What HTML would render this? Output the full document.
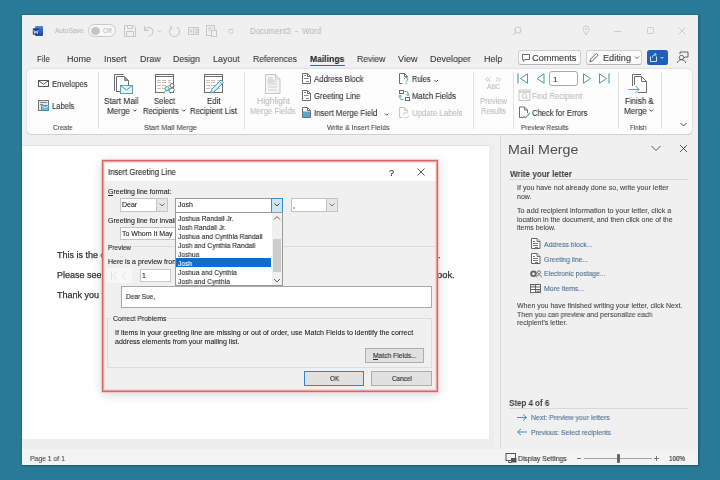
<!DOCTYPE html><html><head><meta charset="utf-8"><style>
html,body{margin:0;padding:0;}
body{width:720px;height:480px;position:relative;overflow:hidden;background:#287a96;font-family:"Liberation Sans",sans-serif;}
.t{position:absolute;white-space:pre;line-height:1;transform-origin:0 0;will-change:transform;-webkit-text-stroke-width:0.1px;}
.r{position:absolute;box-sizing:border-box;}
svg.r{overflow:visible;}
</style></head><body>
<div class="r" style="left:22px;top:15px;width:676px;height:450px;background:#f0f0f0;box-shadow:0 0 2px 0.5px rgba(0,30,50,0.35);"></div>
<svg class="r" style="left:32px;top:25px" width="13" height="13" viewBox="0 0 13 13"><defs><linearGradient id="wg" x1="0" y1="0" x2="0.3" y2="1"><stop offset="0" stop-color="#4a9ae8"/><stop offset="1" stop-color="#1a4fa8"/></linearGradient></defs><rect x="3" y="1" width="8" height="10" rx="1" fill="url(#wg)"/><rect x="0.8" y="3.2" width="6.5" height="6.5" rx="0.8" fill="#1f3f8f"/><path d="M1.8 5l0.9 3.6l1.3-2.6l1.3 2.6L6.2 5" fill="none" stroke="#d8e6fa" stroke-width="0.9"/></svg>
<div class="t" style="left:54.70px;top:27.00px;font-size:8px;color:#b9b9b9;transform:scaleX(0.822);">AutoSave</div>
<div class="r" style="left:87.5px;top:24px;width:28.5px;height:13px;border:1px solid #c9c9c9;border-radius:7px;box-sizing:border-box;background:#f7f7f7;"></div>
<div class="r" style="left:90.5px;top:26.5px;width:9.0px;height:8.0px;background:#c4c4c4;border-radius:50%;"></div>
<div class="t" style="left:103.00px;top:27.00px;font-size:7.5px;color:#bdbdbd;transform:scaleX(0.882);">Off</div>
<svg class="r" style="left:124px;top:25px" width="13" height="13" viewBox="0 0 13 13"><path d="M0.5 0.5h9l2 2v9h-11z" fill="none" stroke="#c8c8c8" stroke-width="1"/><path d="M3.5 0.5v3h5v-3M2.5 11.5v-5h7v5" fill="none" stroke="#c8c8c8" stroke-width="1"/></svg>
<svg class="r" style="left:143px;top:25px" width="13" height="13" viewBox="0 0 13 13"><path d="M1.5 1v4.5h4.5" fill="none" stroke="#c8c8c8" stroke-width="1.1"/><path d="M2 5C3.5 2.5 6 2 8 3C10.3 4.3 10.5 7.5 8.8 9.5C7.8 10.6 6.5 11.2 5 11.5" fill="none" stroke="#c8c8c8" stroke-width="1.1"/></svg>
<svg class="r" style="left:157px;top:29px" width="6" height="5" viewBox="0 0 6 5"><path d="M0.5 1l2 2l2-2" fill="none" stroke="#c8c8c8" stroke-width="0.9"/></svg>
<svg class="r" style="left:168px;top:25px" width="14" height="13" viewBox="0 0 14 13"><path d="M4 2.2A5 5 0 1 0 9 2.2" fill="none" stroke="#c8c8c8" stroke-width="1.1"/><path d="M1.8 0.8L4 2.2L2.8 4.6" fill="none" stroke="#c8c8c8" stroke-width="1"/></svg>
<svg class="r" style="left:188px;top:27px" width="13" height="9" viewBox="0 0 13 9"><rect x="0.5" y="0.5" width="10" height="7" fill="none" stroke="#c8c8c8" stroke-width="1"/><path d="M5.5 0.5v7M3 2v4M1.5 4h3M7 2.5h3M7 4h3M7 5.5h3" stroke="#c8c8c8" stroke-width="1"/></svg>
<svg class="r" style="left:206px;top:25px" width="12" height="13" viewBox="0 0 12 13"><rect x="0.5" y="0.5" width="8" height="10" fill="none" stroke="#c8c8c8" stroke-width="1"/><path d="M2 3h5M2 5h3" stroke="#c8c8c8" stroke-width="1"/><rect x="5.5" y="5.5" width="5" height="6" fill="#f0f0f0" stroke="#c8c8c8" stroke-width="1"/></svg>
<svg class="r" style="left:228px;top:28px" width="7" height="7" viewBox="0 0 7 7"><path d="M0.5 1.5h5M1 2.5v1.3a2 1.7 0 0 0 4 0V2.5" fill="none" stroke="#c8c8c8" stroke-width="0.9"/></svg>
<div class="t" style="left:249.70px;top:27.00px;font-size:8.5px;color:#bcbcbc;transform:scaleX(0.937);">Document3  -  Word</div>
<svg class="r" style="left:512px;top:26px" width="11" height="11" viewBox="0 0 11 11"><circle cx="6" cy="4" r="3" fill="none" stroke="#cdcdcd" stroke-width="1.1"/><path d="M3.9 6.1L1.2 8.8" stroke="#cdcdcd" stroke-width="1.2"/></svg>
<svg class="r" style="left:582px;top:25px" width="9" height="12" viewBox="0 0 9 12"><path d="M4 10L1.6 5.8A3 3 0 1 1 6.4 5.8z" fill="none" stroke="#cdcdcd" stroke-width="1"/><circle cx="4" cy="4" r="1" fill="#cdcdcd"/></svg>
<div class="r" style="left:614px;top:30.5px;width:7px;height:1.0px;background:#cdcdcd;"></div>
<div class="r" style="left:646.5px;top:27px;width:7.0px;height:7px;border:1px solid #cdcdcd;border-radius:1.5px;"></div>
<svg class="r" style="left:678px;top:27px" width="9" height="9" viewBox="0 0 9 9"><path d="M0.5 0.5L7.5 7.5M7.5 0.5L0.5 7.5" stroke="#cdcdcd" stroke-width="1"/></svg>
<div class="t" style="left:36.70px;top:55.00px;font-size:9px;color:#3b3b3b;transform:scaleX(0.883);">File</div>
<div class="t" style="left:66.70px;top:55.00px;font-size:9px;color:#3b3b3b;">Home</div>
<div class="t" style="left:104.20px;top:55.00px;font-size:9px;color:#3b3b3b;">Insert</div>
<div class="t" style="left:139.70px;top:55.00px;font-size:9px;color:#3b3b3b;transform:scaleX(0.981);">Draw</div>
<div class="t" style="left:173.00px;top:55.00px;font-size:9px;color:#3b3b3b;transform:scaleX(0.964);">Design</div>
<div class="t" style="left:213.00px;top:55.00px;font-size:9px;color:#3b3b3b;transform:scaleX(0.988);">Layout</div>
<div class="t" style="left:253.30px;top:55.00px;font-size:9px;color:#3b3b3b;transform:scaleX(0.956);">References</div>
<div class="t" style="left:356.70px;top:55.00px;font-size:9px;color:#3b3b3b;transform:scaleX(0.959);">Review</div>
<div class="t" style="left:397.70px;top:55.00px;font-size:9px;color:#3b3b3b;transform:scaleX(1.013);">View</div>
<div class="t" style="left:430.00px;top:55.00px;font-size:9px;color:#3b3b3b;transform:scaleX(0.992);">Developer</div>
<div class="t" style="left:484.00px;top:55.00px;font-size:9px;color:#3b3b3b;transform:scaleX(0.989);">Help</div>
<div class="t" style="left:310.00px;top:55.00px;font-size:9px;color:#262626;font-weight:700;transform:scaleX(0.953);">Mailings</div>
<div class="r" style="left:310px;top:64.5px;width:34.5px;height:1.5px;background:#3a64a8;border-radius:1px;"></div>
<div class="r" style="left:518px;top:49.5px;width:63px;height:15.5px;border:1px solid #cfcfcf;border-bottom-color:#b5b5b5;border-radius:3px;background:#fbfbfb;"></div>
<svg class="r" style="left:522px;top:54px" width="9" height="9" viewBox="0 0 9 9"><path d="M0.5 0.5h7v5H3L1.2 7.3V5.5H0.5z" fill="none" stroke="#555" stroke-width="0.9"/></svg>
<div class="t" style="left:532.00px;top:54.00px;font-size:8.5px;color:#3a3a3a;transform:scaleX(1.081);">Comments</div>
<div class="r" style="left:586px;top:49.5px;width:56px;height:15.5px;border:1px solid #cfcfcf;border-bottom-color:#b5b5b5;border-radius:3px;background:#fbfbfb;"></div>
<svg class="r" style="left:589px;top:52px" width="11" height="11" viewBox="0 -0.5 11 11"><path d="M0.8 9.2l0.8-2.6l5.8-5.8l1.8 1.8l-5.8 5.8z" fill="none" stroke="#555" stroke-width="0.9"/></svg>
<div class="t" style="left:602.50px;top:54.00px;font-size:8.5px;color:#3a3a3a;transform:scaleX(1.077);">Editing</div>
<svg class="r" style="left:634px;top:56px" width="6" height="4" viewBox="-0.5 0 6 4"><path d="M0.5 0.5l2 2l2-2" fill="none" stroke="#555" stroke-width="0.9"/></svg>
<div class="r" style="left:647px;top:50px;width:20.5px;height:15px;background:#1c5fc0;border-radius:2.5px;"></div>
<svg class="r" style="left:649px;top:52px" width="18" height="12" viewBox="0 0 18 12"><path d="M1.5 4.5v5h6v-5" fill="none" stroke="#e8f0ff" stroke-width="0.9"/><path d="M3.5 5.5c0-1.8 1-2.8 3-3M5.5 0.8l1.6 1.6l-1.6 1.6" fill="none" stroke="#e8f0ff" stroke-width="0.9"/><path d="M11.5 5l1.5 1.5L14.5 5" fill="none" stroke="#e8f0ff" stroke-width="0.9"/></svg>
<svg class="r" style="left:676px;top:51px" width="14" height="13" viewBox="-0.5 -0.5 14 13"><path d="M3.5 2.5V0.5h8v5h-3l-1.5 1.5" fill="none" stroke="#555" stroke-width="0.9"/><circle cx="5" cy="6" r="2.2" fill="#f0f0f0" stroke="#555" stroke-width="0.9"/><path d="M0.8 11.5c0.6-2.3 2.1-3.3 4.2-3.3s3.6 1 4.2 3.3" fill="none" stroke="#555" stroke-width="0.9"/></svg>
<div class="r" style="left:27px;top:69px;width:665px;height:65px;background:#fdfdfd;border-radius:4.5px;box-shadow:0 0.6px 2px rgba(0,0,0,0.18);"></div>
<div class="r" style="left:97.5px;top:72px;width:1.0px;height:57px;background:#e1e1e1;"></div>
<div class="r" style="left:243.5px;top:72px;width:1.0px;height:57px;background:#e1e1e1;"></div>
<div class="r" style="left:472.5px;top:72px;width:1.0px;height:57px;background:#e1e1e1;"></div>
<div class="r" style="left:512.5px;top:72px;width:1.0px;height:57px;background:#e1e1e1;"></div>
<div class="r" style="left:617.5px;top:72px;width:1.0px;height:57px;background:#e1e1e1;"></div>
<div class="r" style="left:661px;top:72px;width:1px;height:57px;background:#e1e1e1;"></div>
<svg class="r" style="left:38px;top:80px" width="13" height="9" viewBox="0 0 13 9"><rect x="0.5" y="0.5" width="10" height="6" fill="none" stroke="#555" stroke-width="1"/><path d="M0.8 0.8L5.5 4.3L10.2 0.8" fill="none" stroke="#555" stroke-width="1"/></svg>
<div class="t" style="left:51.50px;top:80.00px;font-size:8.5px;color:#303030;transform:scaleX(0.894);">Envelopes</div>
<svg class="r" style="left:38px;top:100px" width="13" height="13" viewBox="0 0 13 13"><rect x="0.5" y="0.5" width="10" height="10" fill="#dfe9ee" stroke="#777" stroke-width="1"/><path d="M2 2.5h7M2 4.5h3" stroke="#8a8a8a" stroke-width="1"/><rect x="3.5" y="5.5" width="7" height="5" fill="#6fb6d6" stroke="#3f95bb" stroke-width="1"/><path d="M3.8 5.8l3.2 2.4l3.2-2.4" fill="none" stroke="#e9f6fb" stroke-width="0.9"/></svg>
<div class="t" style="left:51.50px;top:102.00px;font-size:8.5px;color:#303030;transform:scaleX(0.890);">Labels</div>
<div class="t" style="left:53.40px;top:124.00px;font-size:7.5px;color:#4a4a4a;transform:scaleX(0.875);">Create</div>
<svg class="r" style="left:113px;top:73px" width="21" height="22" viewBox="-0.5 -0.5 21 22"><path d="M1 17.5V1H10" fill="none" stroke="#6e6e6e" stroke-width="1"/><path d="M3 18.5V3H11L15 7V12" fill="#fff" stroke="#6e6e6e" stroke-width="1"/><path d="M11 3V7H15z" fill="#9a9a9a" stroke="#6e6e6e" stroke-width="0.8"/><path d="M3 18H7" stroke="#6e6e6e" stroke-width="1"/><rect x="7" y="12" width="12" height="8" fill="#e3f4f6" stroke="#5aa3ae" stroke-width="1"/><path d="M7.3 12.3l5.7 4.2l5.7-4.2" fill="none" stroke="#5aa3ae" stroke-width="1"/></svg>
<div class="t" style="left:104.40px;top:97.00px;font-size:8.5px;color:#303030;transform:scaleX(0.957);">Start Mail</div>
<div class="t" style="left:106.90px;top:107.00px;font-size:8.5px;color:#303030;transform:scaleX(0.959);">Merge</div>
<svg class="r" style="left:132px;top:109px" width="6" height="4" viewBox="-0.5 0 6 4"><path d="M0.5 0.5l1.75 1.75l1.75-1.75" fill="none" stroke="#303030" stroke-width="0.9"/></svg>
<svg class="r" style="left:155px;top:74px" width="22" height="22" viewBox="0 0 22 22"><rect x="0.5" y="0.5" width="18" height="18" fill="#fff" stroke="#6e6e6e" stroke-width="1"/><path d="M0.5 2.5h18" stroke="#6e6e6e" stroke-width="1"/><path d="M2 6.5h4" stroke="#cdbfb4" stroke-width="1"/><path d="M7 6.5h4" stroke="#cdbfb4" stroke-width="1"/><path d="M13 6.5h3" stroke="#cdbfb4" stroke-width="1"/><path d="M2 8.5h4" stroke="#cdbfb4" stroke-width="1"/><path d="M7 8.5h4" stroke="#cdbfb4" stroke-width="1"/><path d="M13 8.5h3" stroke="#cdbfb4" stroke-width="1"/><path d="M2 11.5h4" stroke="#cdbfb4" stroke-width="1"/><path d="M7 11.5h4" stroke="#cdbfb4" stroke-width="1"/><path d="M13 11.5h3" stroke="#cdbfb4" stroke-width="1"/><path d="M2 14.5h4" stroke="#cdbfb4" stroke-width="1"/><path d="M7 14.5h4" stroke="#cdbfb4" stroke-width="1"/><path d="M13 14.5h3" stroke="#cdbfb4" stroke-width="1"/><path d="M14.3 16.5c0.4-1.7 1.3-2.4 2.7-2.4s2.3 0.7 2.7 2.4" fill="#fff" stroke="#6e6e6e" stroke-width="1"/><circle cx="17" cy="11.5" r="2" fill="#fff" stroke="#6e6e6e" stroke-width="1"/><path d="M8.6 19.5c0.6-2 1.8-3 3.4-3s2.8 1 3.4 3" fill="#e3f5fa" stroke="#4aa0b5" stroke-width="1"/><circle cx="12" cy="14.5" r="2" fill="#d8f1f8" stroke="#4aa0b5" stroke-width="1"/></svg>
<div class="t" style="left:153.75px;top:97.00px;font-size:8.5px;color:#303030;transform:scaleX(0.891);">Select</div>
<div class="t" style="left:143.00px;top:107.00px;font-size:8.5px;color:#303030;transform:scaleX(0.901);">Recipients</div>
<svg class="r" style="left:181px;top:109px" width="6" height="4" viewBox="-0.5 0 6 4"><path d="M0.5 0.5l1.75 1.75l1.75-1.75" fill="none" stroke="#303030" stroke-width="0.9"/></svg>
<svg class="r" style="left:204px;top:74px" width="22" height="22" viewBox="0 0 22 22"><rect x="0.5" y="0.5" width="18" height="18" fill="#fff" stroke="#6e6e6e" stroke-width="1"/><path d="M0.5 2.5h18" stroke="#6e6e6e" stroke-width="1"/><path d="M2 6.5h4" stroke="#cdbfb4" stroke-width="1"/><path d="M7 6.5h4" stroke="#cdbfb4" stroke-width="1"/><path d="M13 6.5h3" stroke="#cdbfb4" stroke-width="1"/><path d="M2 8.5h4" stroke="#cdbfb4" stroke-width="1"/><path d="M7 8.5h4" stroke="#cdbfb4" stroke-width="1"/><path d="M13 8.5h3" stroke="#cdbfb4" stroke-width="1"/><path d="M2 11.5h4" stroke="#cdbfb4" stroke-width="1"/><path d="M7 11.5h4" stroke="#cdbfb4" stroke-width="1"/><path d="M13 11.5h3" stroke="#cdbfb4" stroke-width="1"/><path d="M2 14.5h4" stroke="#cdbfb4" stroke-width="1"/><path d="M7 14.5h4" stroke="#cdbfb4" stroke-width="1"/><path d="M13 14.5h3" stroke="#cdbfb4" stroke-width="1"/><path d="M6.5 19L7.5 15.5L17 6L19.5 8.5L10 18z" fill="#d4eef7" stroke="#4aa0b5" stroke-width="1"/><path d="M15.5 7.5L18 10" stroke="#4aa0b5" stroke-width="0.8"/></svg>
<div class="t" style="left:206.50px;top:97.00px;font-size:8.5px;color:#303030;transform:scaleX(0.922);">Edit</div>
<div class="t" style="left:189.80px;top:107.00px;font-size:8.5px;color:#303030;transform:scaleX(0.919);">Recipient List</div>
<div class="t" style="left:144.00px;top:124.00px;font-size:7.5px;color:#4a4a4a;transform:scaleX(0.963);">Start Mail Merge</div>
<svg class="r" style="left:265px;top:74px" width="17" height="21" viewBox="0 0 17 21"><path d="M0.5 0.5h10l4.5 4.5v14.5H0.5z" fill="#f4f4f4" stroke="#c6c6c6" stroke-width="1"/><path d="M10.5 0.5v4.5h4.5" fill="none" stroke="#c6c6c6"/><path d="M3 4h5M3 7h9M3 10h9M3 13h9M3 16h9" stroke="#cfcfcf" stroke-width="1"/><rect x="2.5" y="5" width="6" height="4" fill="#dcdcdc"/></svg>
<div class="t" style="left:256.70px;top:97.00px;font-size:8.5px;color:#bdbdbd;transform:scaleX(0.995);">Highlight</div>
<div class="t" style="left:250.40px;top:107.00px;font-size:8.5px;color:#bdbdbd;transform:scaleX(0.924);">Merge Fields</div>
<svg class="r" style="left:302px;top:73px" width="11" height="13" viewBox="0 0 11 13"><path d="M0.5 0.5H5.5L8.5 3.5V10.5H0.5Z" fill="#fff" stroke="#6e6e6e" stroke-width="1"/><path d="M5.5 0.5V3.5H8.5" fill="none" stroke="#6e6e6e" stroke-width="1"/><path d="M2 2.5h2M2 5.5h4.5M4 8.5h3" stroke="#8a8a8a" stroke-width="1"/></svg>
<div class="t" style="left:314.10px;top:75.00px;font-size:8.5px;color:#303030;transform:scaleX(0.913);">Address Block</div>
<svg class="r" style="left:302px;top:90px" width="11" height="13" viewBox="0 0 11 13"><path d="M0.5 0.5H5.5L8.5 3.5V10.5H0.5Z" fill="#fff" stroke="#6e6e6e" stroke-width="1"/><path d="M5.5 0.5V3.5H8.5" fill="none" stroke="#6e6e6e" stroke-width="1"/><path d="M2 2.5h2M2 5.5h4.5M4 8.5h3" stroke="#8a8a8a" stroke-width="1"/></svg>
<div class="t" style="left:314.10px;top:92.00px;font-size:8.5px;color:#303030;transform:scaleX(0.909);">Greeting Line</div>
<svg class="r" style="left:302px;top:107px" width="11" height="13" viewBox="0 0 11 13"><rect x="1" y="4.5" width="7" height="5.5" fill="#5aa9c9"/><path d="M0.5 0.5H5.5L8.5 3.5V10.5H0.5Z" fill="none" stroke="#6e6e6e" stroke-width="1"/><path d="M5.5 0.5V3.5H8.5" fill="none" stroke="#6e6e6e" stroke-width="1"/></svg>
<div class="t" style="left:314.10px;top:109.00px;font-size:8.5px;color:#303030;transform:scaleX(0.926);">Insert Merge Field</div>
<svg class="r" style="left:384px;top:113px" width="6" height="4" viewBox="-0.5 0 6 4"><path d="M0.5 0.5l1.75 1.75l1.75-1.75" fill="none" stroke="#303030" stroke-width="0.9"/></svg>
<div class="t" style="left:326.50px;top:124.00px;font-size:7.5px;color:#4a4a4a;transform:scaleX(0.928);">Write &amp; Insert Fields</div>
<svg class="r" style="left:399px;top:73px" width="13" height="13" viewBox="0 0 13 13"><path d="M3.5 10.5H0.5V0.5H5.5L8.5 3.5V4.5" fill="none" stroke="#6e6e6e" stroke-width="1"/><path d="M5.5 0.5V3.5H8.5" fill="none" stroke="#6e6e6e" stroke-width="1"/><path d="M5.3 6.3a1.7 1.7 0 1 1 2.5 1.5c-0.5 0.3-0.8 0.6-0.8 1.3M7 10v1.2" fill="none" stroke="#4aa0b5" stroke-width="1"/></svg>
<div class="t" style="left:411.50px;top:75.00px;font-size:8.5px;color:#303030;transform:scaleX(0.851);">Rules</div>
<svg class="r" style="left:434px;top:79px" width="6" height="4" viewBox="0 -0.5 6 4"><path d="M0.5 0.5l1.75 1.75l1.75-1.75" fill="none" stroke="#303030" stroke-width="0.9"/></svg>
<svg class="r" style="left:398px;top:89px" width="14" height="14" viewBox="0 0 14 14"><rect x="1.5" y="1.5" width="4" height="3" fill="#fff" stroke="#6e6e6e" stroke-width="1"/><rect x="7.5" y="8.5" width="4" height="3" fill="#fff" stroke="#6e6e6e" stroke-width="1"/><path d="M6.5 2.5H8.5Q10 2.5 10 4V6.5M8.5 5.3L10 6.8L11.5 5.3M5.5 10.5H3.5Q2 10.5 2 9V6.5M0.5 7.7L2 6.2L3.5 7.7" fill="none" stroke="#4aa0b5" stroke-width="1"/></svg>
<div class="t" style="left:411.50px;top:92.00px;font-size:8.5px;color:#303030;transform:scaleX(0.911);">Match Fields</div>
<svg class="r" style="left:399px;top:107px" width="13" height="13" viewBox="0 0 13 13"><path d="M3.5 10.5H0.5V0.5H5.5L8.5 3.5V5" fill="none" stroke="#c8c8c8" stroke-width="1"/><path d="M5.5 0.5V3.5H8.5" fill="none" stroke="#c8c8c8" stroke-width="1"/><path d="M4.5 8A2.5 2.5 0 0 1 9 6.5M9.5 8.5A2.5 2.5 0 0 1 5 10" fill="none" stroke="#c8c8c8" stroke-width="1"/></svg>
<div class="t" style="left:411.50px;top:109.00px;font-size:8.5px;color:#bdbdbd;transform:scaleX(0.921);">Update Labels</div>
<svg class="r" style="left:484px;top:77px" width="20" height="6" viewBox="0 0 20 6"><path d="M4 0.5L1.5 2.5l2.5 2M6.5 0.5L4 2.5l2.5 2M12 0.5L14.5 2.5l-2.5 2M14.5 0.5L17 2.5l-2.5 2" fill="none" stroke="#c6c6c6" stroke-width="0.9"/></svg>
<div class="t" style="left:486.80px;top:83.00px;font-size:7px;color:#b9b9b9;transform:scaleX(0.931);">ABC</div>
<div class="t" style="left:479.80px;top:97.00px;font-size:8.5px;color:#bdbdbd;transform:scaleX(0.896);">Preview</div>
<div class="t" style="left:480.80px;top:107.00px;font-size:8.5px;color:#bdbdbd;transform:scaleX(0.882);">Results</div>
<svg class="r" style="left:517px;top:73px" width="13" height="12" viewBox="0 0 13 12"><path d="M1 0.5v10" stroke="#4f97ae" stroke-width="1.1"/><path d="M10.5 0.8L3.5 5.5l7 4.7z" fill="none" stroke="#4f97ae" stroke-width="1"/></svg>
<svg class="r" style="left:536px;top:73px" width="10" height="12" viewBox="0 0 10 12"><path d="M8 0.8L1 5.5l7 4.7z" fill="none" stroke="#4f97ae" stroke-width="1"/></svg>
<div class="r" style="left:549px;top:71px;width:29px;height:15px;border:1px solid #a8a8a8;border-radius:3px;background:#fff;"></div>
<div class="t" style="left:553.00px;top:76.00px;font-size:8px;color:#303030;">1</div>
<svg class="r" style="left:582px;top:73px" width="10" height="12" viewBox="-0.5 0 10 12"><path d="M1 0.8L8 5.5l-7 4.7z" fill="none" stroke="#4f97ae" stroke-width="1"/></svg>
<svg class="r" style="left:598px;top:73px" width="13" height="12" viewBox="0 0 13 12"><path d="M11 0.5v10" stroke="#4f97ae" stroke-width="1.1"/><path d="M1.5 0.8L8.5 5.5l-7 4.7z" fill="none" stroke="#4f97ae" stroke-width="1"/></svg>
<svg class="r" style="left:518px;top:89px" width="13" height="13" viewBox="-0.5 -0.5 13 13"><rect x="0.5" y="0.5" width="11" height="10.5" fill="none" stroke="#c8c8c8"/><path d="M0.5 2.5h11" stroke="#c8c8c8" stroke-width="1.5"/><circle cx="6" cy="6.5" r="2.3" fill="none" stroke="#c8c8c8"/><path d="M7.7 8.2l2 2" stroke="#c8c8c8"/></svg>
<div class="t" style="left:531.90px;top:92.00px;font-size:8.5px;color:#bdbdbd;transform:scaleX(0.920);">Find Recipient</div>
<svg class="r" style="left:519px;top:106px" width="13" height="13" viewBox="0 -0.5 13 13"><path d="M0.5 0.5h5l3 3v3" fill="none" stroke="#6e6e6e" stroke-width="1"/><path d="M0.5 0.5v10.5h4" fill="none" stroke="#6e6e6e"/><path d="M5.5 0.5v3h3" fill="none" stroke="#6e6e6e" stroke-width="0.9"/><path d="M4.5 9.5l2 1.8l4.5-5" fill="none" stroke="#4aa36b" stroke-width="1.1"/></svg>
<div class="t" style="left:531.90px;top:109.00px;font-size:8.5px;color:#303030;transform:scaleX(0.899);">Check for Errors</div>
<div class="t" style="left:520.80px;top:124.00px;font-size:7.5px;color:#4a4a4a;transform:scaleX(0.883);">Preview Results</div>
<svg class="r" style="left:628px;top:73px" width="22" height="22" viewBox="0 0 22 22"><path d="M4.5 13V1.5H13" fill="none" stroke="#6e6e6e" stroke-width="1"/><path d="M6.5 12V3.5H13.5L18.5 8.5V19.5H10" fill="#fff" stroke="#6e6e6e" stroke-width="1"/><path d="M13.5 3.5V8.5H18.5" fill="none" stroke="#6e6e6e" stroke-width="1"/><path d="M0.5 16.5H11M7.5 13L11 16.5L7.5 20" fill="none" stroke="#4aa0b5" stroke-width="1"/></svg>
<div class="t" style="left:624.60px;top:97.00px;font-size:8.5px;color:#303030;transform:scaleX(0.935);">Finish &amp;</div>
<div class="t" style="left:624.00px;top:107.00px;font-size:8.5px;color:#303030;transform:scaleX(0.955);">Merge</div>
<svg class="r" style="left:649px;top:109px" width="6" height="4" viewBox="0 0 6 4"><path d="M0.5 0.5l1.75 1.75l1.75-1.75" fill="none" stroke="#303030" stroke-width="0.9"/></svg>
<div class="t" style="left:630.40px;top:124.00px;font-size:7.5px;color:#4a4a4a;transform:scaleX(0.830);">Finish</div>
<svg class="r" style="left:680px;top:122px" width="8" height="5" viewBox="0 -0.5 8 5"><path d="M0.5 0.5l3 3l3-3" fill="none" stroke="#444" stroke-width="1"/></svg>
<div class="r" style="left:22px;top:134.5px;width:478px;height:314.5px;background:#ededed;"></div>
<div class="r" style="left:22px;top:134.5px;width:478px;height:10.5px;background:#f0f0f0;"></div>
<div class="r" style="left:493.5px;top:134.5px;width:6.0px;height:314.5px;background:#f1f1f1;"></div>
<div class="r" style="left:22px;top:145px;width:467px;height:1px;background:#e2e2e2;"></div>
<div class="r" style="left:22px;top:146px;width:467px;height:293px;background:#ffffff;"></div>
<div class="r" style="left:500px;top:134.5px;width:1px;height:314.5px;background:#dcdcdc;"></div>
<div class="r" style="left:501px;top:134.5px;width:197px;height:314.5px;background:#f0f0f0;"></div>
<div class="t" style="left:56.50px;top:251.00px;font-size:9px;color:#333333;-webkit-text-stroke:0.25px #333;">This is the content of the letter</div>
<div class="t" style="left:56.50px;top:271.00px;font-size:9px;color:#333333;-webkit-text-stroke:0.25px #333;">Please see the enclosed catalog</div>
<div class="t" style="left:56.50px;top:291.00px;font-size:9px;color:#333333;-webkit-text-stroke:0.25px #333;">Thank you for your business</div>
<div class="t" style="left:438.00px;top:251.00px;font-size:9px;color:#333333;-webkit-text-stroke:0.25px #333;">.</div>
<div class="t" style="left:437.00px;top:271.00px;font-size:9px;color:#333333;transform:scaleX(1.041);-webkit-text-stroke:0.25px #333;">ook.</div>
<div class="r" style="left:22px;top:449px;width:676px;height:16px;background:#f3f3f3;"></div>
<div class="t" style="left:29.60px;top:455.00px;font-size:7.5px;color:#444;transform:scaleX(0.910);">Page 1 of 1</div>
<svg class="r" style="left:505px;top:453px" width="13" height="11" viewBox="-0.5 0 13 11"><rect x="0.5" y="0.5" width="9.5" height="7" fill="none" stroke="#555" stroke-width="1"/><path d="M3 8.5v1h3" stroke="#555"/><rect x="5.5" y="5" width="5.5" height="4.5" fill="#555"/></svg>
<div class="t" style="left:518.00px;top:455.00px;font-size:7.5px;color:#333;transform:scaleX(0.906);">Display Settings</div>
<div class="r" style="left:576.5px;top:457.5px;width:4.0px;height:1.0px;background:#777;"></div>
<div class="r" style="left:584px;top:457.5px;width:67.5px;height:1.0px;background:#a5a5a5;"></div>
<div class="r" style="left:617px;top:453.5px;width:3px;height:9.0px;background:#666;border-radius:1px;"></div>
<div class="r" style="left:654px;top:457.5px;width:5px;height:1.0px;background:#777;"></div>
<div class="r" style="left:656px;top:455.5px;width:1px;height:5.0px;background:#777;"></div>
<div class="t" style="left:668.60px;top:455.00px;font-size:8px;color:#222;transform:scaleX(0.787);">100%</div>
<div class="t" style="left:507.60px;top:143.00px;font-size:13px;color:#4f4f4f;transform:scaleX(1.095);-webkit-text-stroke-width:0;">Mail Merge</div>
<svg class="r" style="left:651px;top:145px" width="11" height="7" viewBox="0 -0.5 11 7"><path d="M0.5 0.5l4.5 4.5l4.5-4.5" fill="none" stroke="#555" stroke-width="1"/></svg>
<svg class="r" style="left:679px;top:144px" width="9" height="9" viewBox="-0.5 -0.5 9 9"><path d="M0.5 0.5l7 7M7.5 0.5l-7 7" stroke="#555" stroke-width="1"/></svg>
<div class="t" style="left:509.70px;top:170.00px;font-size:8.5px;color:#3a3a3a;font-weight:700;transform:scaleX(0.950);-webkit-text-stroke-width:0;">Write your letter</div>
<div class="r" style="left:509px;top:179px;width:179px;height:1px;background:#d8d8d8;"></div>
<div class="t" style="left:516.70px;top:184.00px;font-size:7px;color:#4a4a4a;transform:scaleX(1.015);">If you have not already done so, write your letter</div>
<div class="t" style="left:516.70px;top:193.00px;font-size:7px;color:#4a4a4a;">now.</div>
<div class="t" style="left:516.70px;top:207.00px;font-size:7px;color:#4a4a4a;transform:scaleX(1.030);">To add recipient information to your letter, click a</div>
<div class="t" style="left:516.70px;top:216.00px;font-size:7px;color:#4a4a4a;">location in the document, and then click one of the</div>
<div class="t" style="left:516.70px;top:224.00px;font-size:7px;color:#4a4a4a;">items below.</div>
<svg class="r" style="left:531px;top:238px" width="11" height="12" viewBox="0 0 11 12"><path d="M0.5 0.5h5.5l3 3v7H0.5z" fill="#fff" stroke="#666" stroke-width="1"/><path d="M6 0.5v3h3" fill="#ddd" stroke="#666" stroke-width="0.9"/><path d="M2 3.5h2M2 5.5h5M2 7.5h5M4 9.5h3" stroke="#777" stroke-width="1"/></svg>
<div class="t" style="left:543.90px;top:241.00px;font-size:7px;color:#4d7091;transform:scaleX(0.970);">Address block...</div>
<svg class="r" style="left:531px;top:253px" width="11" height="12" viewBox="0 0 11 12"><path d="M0.5 0.5h5.5l3 3v7H0.5z" fill="#fff" stroke="#666" stroke-width="1"/><path d="M6 0.5v3h3" fill="#ddd" stroke="#666" stroke-width="0.9"/><path d="M2 3.5h2M2 5.5h5M2 7.5h5M4 9.5h3" stroke="#777" stroke-width="1"/></svg>
<div class="t" style="left:543.90px;top:256.00px;font-size:7px;color:#4d7091;transform:scaleX(0.969);">Greeting line...</div>
<svg class="r" style="left:530px;top:270px" width="13" height="9" viewBox="0 0 13 9"><circle cx="3.5" cy="3.8" r="3.3" fill="#666"/><circle cx="3.5" cy="3.8" r="1.4" fill="#f0f0f0"/><circle cx="9" cy="2.3" r="1.6" fill="none" stroke="#666" stroke-width="0.9"/><path d="M6.5 7.3c0.3-1.6 1.1-2.4 2.5-2.4s2.2 0.8 2.5 2.4" fill="none" stroke="#666" stroke-width="0.9"/></svg>
<div class="t" style="left:543.90px;top:270.00px;font-size:7px;color:#4d7091;transform:scaleX(0.970);">Electronic postage...</div>
<svg class="r" style="left:530px;top:284px" width="12" height="10" viewBox="0 0 12 10"><rect x="0.5" y="0.5" width="10" height="8" fill="#fff" stroke="#666"/><path d="M5.5 0.5v8M0.5 3h10M0.5 5.5h10" stroke="#666" stroke-width="1"/><rect x="1.5" y="1.5" width="3" height="1" fill="#888"/><rect x="6.5" y="6.5" width="3" height="1.5" fill="#888"/></svg>
<div class="t" style="left:543.90px;top:285.00px;font-size:7px;color:#4d7091;transform:scaleX(0.991);">More items...</div>
<div class="t" style="left:516.70px;top:302.00px;font-size:7px;color:#4a4a4a;">When you have finished writing your letter, click Next.</div>
<div class="t" style="left:516.70px;top:311.00px;font-size:7px;color:#4a4a4a;transform:scaleX(0.988);">Then you can preview and personalize each</div>
<div class="t" style="left:516.70px;top:319.00px;font-size:7px;color:#4a4a4a;">recipient's letter.</div>
<div class="t" style="left:509.30px;top:399.00px;font-size:8.5px;color:#3a3a3a;font-weight:700;transform:scaleX(0.938);-webkit-text-stroke-width:0;">Step 4 of 6</div>
<div class="r" style="left:509px;top:408px;width:179px;height:1px;background:#d8d8d8;"></div>
<svg class="r" style="left:516px;top:414px" width="12" height="8" viewBox="-0.5 0 12 8"><path d="M0.5 3.5h9.5M6.5 0.5l3.5 3l-3.5 3" fill="none" stroke="#3d93b8" stroke-width="1"/></svg>
<div class="t" style="left:530.70px;top:414.00px;font-size:7px;color:#4d7091;transform:scaleX(0.988);">Next: Preview your letters</div>
<svg class="r" style="left:516px;top:428px" width="12" height="8" viewBox="-0.5 -0.5 12 8"><path d="M10.5 3.5H1M4.5 0.5L1 3.5l3.5 3" fill="none" stroke="#3d93b8" stroke-width="1"/></svg>
<div class="t" style="left:530.70px;top:429.00px;font-size:7px;color:#4d7091;transform:scaleX(0.968);">Previous: Select recipients</div>
<div class="r" style="left:102px;top:160px;width:336px;height:232px;background:#f0f0f0;box-shadow:0 2px 10px rgba(0,0,0,0.18);"></div>
<div class="r" style="left:104px;top:162px;width:332px;height:19px;background:#ffffff;"></div>
<div class="t" style="left:107.50px;top:168.00px;font-size:8.5px;color:#262626;transform:scaleX(0.908);">Insert Greeting Line</div>
<div class="t" style="left:388.50px;top:169.00px;font-size:9px;color:#262626;">?</div>
<svg class="r" style="left:417px;top:168px" width="9" height="9" viewBox="0 0 9 9"><path d="M0.5 0.5l7 7M7.5 0.5l-7 7" stroke="#444" stroke-width="0.9"/></svg>
<div class="t" style="left:107.80px;top:188.00px;font-size:7px;color:#262626;">Greeting line format:</div>
<div class="r" style="left:108px;top:194.5px;width:5px;height:0.8000000000000114px;background:#262626;"></div>
<div class="r" style="left:120px;top:198px;width:48px;height:14px;background:#fff;border:1px solid #c4c4c4;"></div>
<div class="r" style="left:156px;top:198px;width:12px;height:14px;background:#e6e6e6;border:1px solid #c4c4c4;"></div>
<svg class="r" style="left:159px;top:203px" width="7" height="5" viewBox="0 0 7 5"><path d="M0.5 0.5l2.5 2.5l2.5-2.5" fill="none" stroke="#666" stroke-width="0.9"/></svg>
<div class="t" style="left:122.00px;top:201.00px;font-size:7px;color:#262626;">Dear</div>
<div class="r" style="left:175px;top:198px;width:108px;height:14.5px;background:#fff;border:1px solid #9a9a9a;"></div>
<div class="r" style="left:271px;top:198px;width:12px;height:14.5px;background:#cde6f7;border:1px solid #3c8fd0;"></div>
<svg class="r" style="left:274px;top:203px" width="7" height="5" viewBox="0 0 7 5"><path d="M0.5 0.5l2.5 2.5l2.5-2.5" fill="none" stroke="#333" stroke-width="0.9"/></svg>
<div class="t" style="left:177.80px;top:201.00px;font-size:7px;color:#262626;">Josh</div>
<div class="r" style="left:290.5px;top:198px;width:47.5px;height:13.5px;background:#fff;border:1px solid #c4c4c4;"></div>
<div class="r" style="left:326px;top:198px;width:12px;height:13.5px;background:#e6e6e6;border:1px solid #c4c4c4;"></div>
<svg class="r" style="left:329px;top:203px" width="7" height="5" viewBox="0 0 7 5"><path d="M0.5 0.5l2.5 2.5l2.5-2.5" fill="none" stroke="#666" stroke-width="0.9"/></svg>
<div class="t" style="left:293.00px;top:202.00px;font-size:7px;color:#262626;">,</div>
<div class="t" style="left:107.80px;top:217.00px;font-size:7px;color:#262626;">Greeting line for invalid</div>
<div class="r" style="left:120px;top:226.5px;width:80px;height:13.5px;background:#fff;border:1px solid #c4c4c4;"></div>
<div class="t" style="left:122.00px;top:230.00px;font-size:7px;color:#262626;">To Whom It May</div>
<div class="t" style="left:107.50px;top:244.00px;font-size:7px;color:#262626;transform:scaleX(0.924);">Preview</div>
<div class="r" style="left:133px;top:246px;width:303px;height:1px;background:#dcdcdc;"></div>
<div class="t" style="left:107.50px;top:258.00px;font-size:7px;color:#262626;">Here is a preview from</div>
<div class="r" style="left:107px;top:268px;width:25px;height:15px;background:#f7f7f7;"></div>
<svg class="r" style="left:111px;top:271px" width="19" height="10" viewBox="0 0 19 10"><path d="M0.5 0.5v8M5.5 0.8L2 4.5l3.5 3.7M14.5 0.8L11 4.5l3.5 3.7" fill="none" stroke="#e0e0e0" stroke-width="1"/></svg>
<div class="r" style="left:139.5px;top:268.5px;width:31.0px;height:13.5px;background:#fff;border:1px solid #c8c8c8;"></div>
<div class="t" style="left:142.00px;top:272.00px;font-size:7px;color:#262626;">1</div>
<div class="r" style="left:120.5px;top:285.5px;width:311.5px;height:22.5px;background:#fff;border:1px solid #a8a8a8;"></div>
<div class="t" style="left:125.80px;top:293.00px;font-size:7.2px;color:#262626;transform:scaleX(0.901);">Dear Sue,</div>
<div class="r" style="left:175px;top:212px;width:108px;height:73.5px;background:#fff;border:1px solid #9a9a9a;"></div>
<div class="r" style="left:271.5px;top:213px;width:10.5px;height:71.5px;background:#f0f0f0;"></div>
<div class="r" style="left:272.5px;top:239px;width:8.5px;height:33px;background:#cdcdcd;"></div>
<svg class="r" style="left:273px;top:216px" width="8" height="5" viewBox="-0.5 0 8 5"><path d="M0.5 3.5l3-3l3 3" fill="none" stroke="#555" stroke-width="0.9"/></svg>
<svg class="r" style="left:273px;top:278px" width="8" height="5" viewBox="-0.5 -0.5 8 5"><path d="M0.5 0.5l3 3l3-3" fill="none" stroke="#555" stroke-width="0.9"/></svg>
<div class="r" style="left:176px;top:258.4px;width:95px;height:9.0px;background:#0a6fd0;"></div>
<div class="t" style="left:177.50px;top:215.00px;font-size:7px;color:#262626;transform:scaleX(0.964);">Joshua Randall Jr.</div>
<div class="t" style="left:177.50px;top:224.00px;font-size:7px;color:#262626;transform:scaleX(0.962);">Josh Randall Jr.</div>
<div class="t" style="left:177.50px;top:233.00px;font-size:7px;color:#262626;transform:scaleX(0.965);">Joshua and Cynthia Randall</div>
<div class="t" style="left:177.50px;top:242.00px;font-size:7px;color:#262626;transform:scaleX(0.968);">Josh and Cynthia Randall</div>
<div class="t" style="left:177.50px;top:251.00px;font-size:7px;color:#262626;transform:scaleX(0.939);">Joshua</div>
<div class="t" style="left:177.50px;top:260.00px;font-size:7px;color:#ffffff;transform:scaleX(0.940);">Josh</div>
<div class="t" style="left:177.50px;top:269.00px;font-size:7px;color:#262626;transform:scaleX(0.950);">Joshua and Cynthia</div>
<div class="t" style="left:177.50px;top:278.00px;font-size:7px;color:#262626;transform:scaleX(0.960);">Josh and Cynthia</div>
<div class="r" style="left:107px;top:318px;width:325px;height:49.5px;border:1px solid #dcdcdc;"></div>
<div class="r" style="left:110px;top:316px;width:58px;height:4px;background:#f0f0f0;"></div>
<div class="t" style="left:112.80px;top:315.00px;font-size:7px;color:#262626;transform:scaleX(0.979);">Correct Problems</div>
<div class="t" style="left:115.00px;top:329.00px;font-size:7px;color:#262626;transform:scaleX(1.019);">If items in your greeting line are missing or out of order, use Match Fields to identify the correct</div>
<div class="t" style="left:115.00px;top:338.00px;font-size:7px;color:#262626;transform:scaleX(1.009);">address elements from your mailing list.</div>
<div class="r" style="left:364.5px;top:347.5px;width:59.5px;height:15.5px;background:#e1e1e1;border:1px solid #adadad;"></div>
<div class="t" style="left:372.50px;top:352.00px;font-size:7px;color:#262626;transform:scaleX(0.961);">Match Fields...</div>
<div class="r" style="left:373px;top:358.6px;width:5px;height:0.7999999999999545px;background:#262626;"></div>
<div class="r" style="left:304px;top:370.5px;width:60px;height:15.0px;background:#e1e1e1;border:1px solid #2d86d2;"></div>
<div class="t" style="left:329.50px;top:375.00px;font-size:7px;color:#262626;transform:scaleX(0.915);">OK</div>
<div class="r" style="left:371px;top:370.5px;width:61px;height:15.0px;background:#e1e1e1;border:1px solid #adadad;"></div>
<div class="t" style="left:392.00px;top:375.00px;font-size:7px;color:#262626;transform:scaleX(0.906);">Cancel</div>
<div class="r" style="left:101px;top:159px;width:338px;height:234px;border:1px solid rgba(240,170,170,0.45);"></div>
<div class="r" style="left:102px;top:160px;width:336px;height:232px;border:1px solid #cd6a6a;"></div>
<div class="r" style="left:103px;top:161px;width:334px;height:230px;border:1px solid #ef9d9d;"></div>
<div class="r" style="left:104px;top:162px;width:332px;height:228px;border:1px solid rgba(245,190,190,0.5);"></div>
</body></html>
